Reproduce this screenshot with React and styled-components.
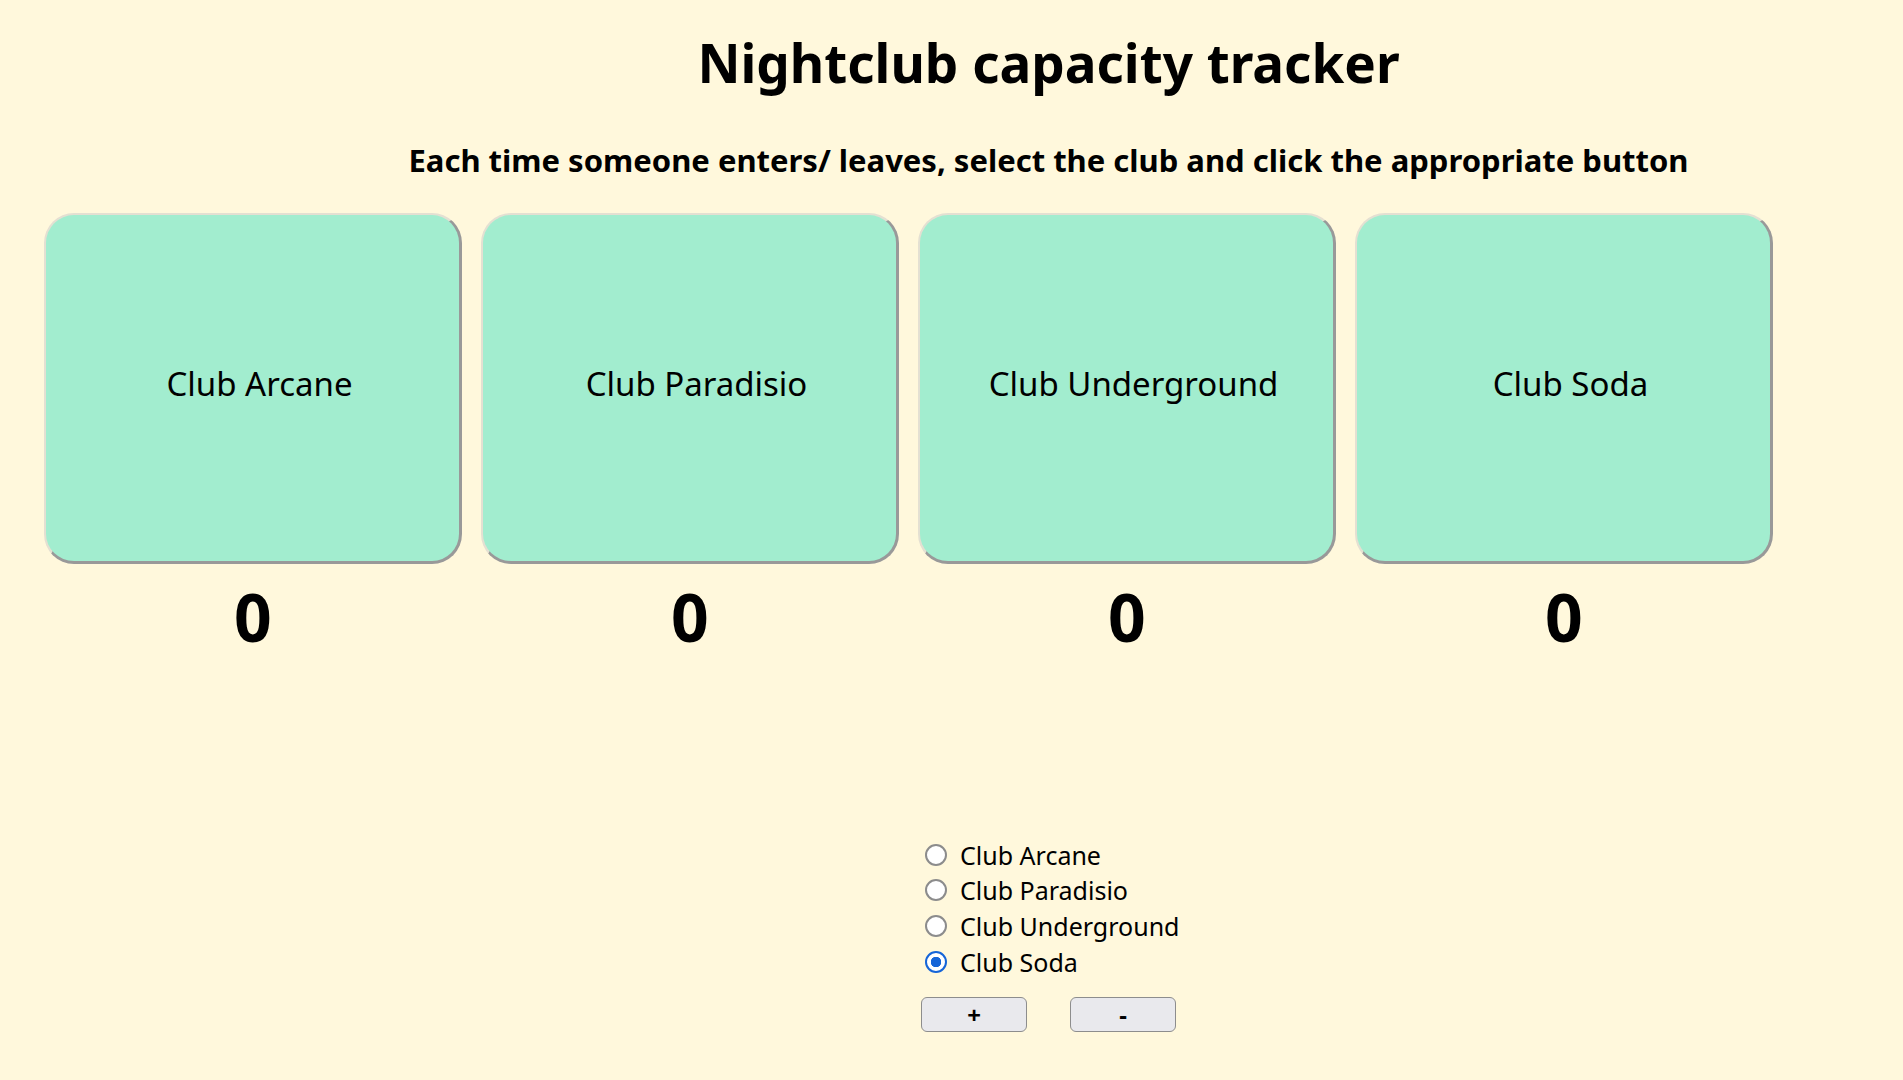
import React, { useState } from 'react';
import styled, { createGlobalStyle } from 'styled-components';

const GlobalStyle = createGlobalStyle`
  body {
    margin: 0;
    background-color: #fff8dc;
    font-family: "Noto Sans", "Open Sans", sans-serif;
    color: #000;
  }
`;

const Page = styled.div`
  padding: 30px 0 40px 44px;
`;

const Header = styled.header`
  padding-left: 150px;
  text-align: center;
`;

const Title = styled.h1`
  margin: 0;
  font-size: 53px;
  line-height: 66px;
  font-weight: 700;
`;

const Subtitle = styled.h3`
  margin: 44px 0 0;
  font-size: 31px;
  line-height: 40px;
  font-weight: 700;
`;

const ClubRow = styled.div`
  display: flex;
  gap: 19px;
  margin-top: 33px;
`;

const ClubColumn = styled.div`
  width: 418px;
  display: flex;
  flex-direction: column;
  align-items: center;
`;

const ClubCard = styled.div`
  box-sizing: border-box;
  width: 100%;
  height: 351px;
  padding: 0 0 10px 14px;
  display: flex;
  align-items: center;
  justify-content: center;
  background-color: #a2edcf;
  border: 2px solid;
  border-color: #e4e0d2 #999 #999 #e4e0d2;
  border-width: 2px 3px 3px 2px;
  border-radius: 30px;
  font-size: 33px;
`;

const Count = styled.div`
  margin-top: 12px;
  font-size: 66px;
  line-height: 80px;
  font-weight: 700;
`;

const Controls = styled.div`
  margin: 181px 0 0 877px;
`;

const RadioRow = styled.label`
  display: flex;
  align-items: center;
  height: 35.6px;
  font-size: 25px;
`;

const Radio = styled.input`
  appearance: none;
  box-sizing: border-box;
  width: 22px;
  height: 22px;
  margin: 0 13px 0 4px;
  border: 2.5px solid #8c8c8c;
  border-radius: 50%;
  background: #fff;

  &:checked {
    border-color: #1565d8;
    background: radial-gradient(circle, #1565d8 0 5px, #fff 5.5px);
  }
`;

const ButtonRow = styled.div`
  display: flex;
  gap: 43px;
  margin-top: 18px;
`;

const StepButton = styled.button`
  width: 106px;
  height: 35px;
  background-color: #e9e9ed;
  border: 1px solid #8d8d8d;
  border-radius: 6px;
  font-family: "Noto Sans", sans-serif;
  font-size: 24px;
  font-weight: 700;
  line-height: 1;
  padding: 0;
  color: #000;
`;

const clubs = ['Club Arcane', 'Club Paradisio', 'Club Underground', 'Club Soda'];

export default function App() {
  const [selected, setSelected] = useState(3);
  const [counts, setCounts] = useState([0, 0, 0, 0]);

  const change = (d) =>
    setCounts((c) => c.map((v, i) => (i === selected ? Math.max(0, v + d) : v)));

  return (
    <Page>
      <GlobalStyle />
      <Header>
        <Title>Nightclub capacity tracker</Title>
        <Subtitle>Each time someone enters/ leaves, select the club and click the appropriate button</Subtitle>
      </Header>
      <ClubRow>
        {clubs.map((name, i) => (
          <ClubColumn key={name}>
            <ClubCard>{name}</ClubCard>
            <Count>{counts[i]}</Count>
          </ClubColumn>
        ))}
      </ClubRow>
      <Controls>
        {clubs.map((name, i) => (
          <RadioRow key={name}>
            <Radio
              type="radio"
              name="club"
              checked={selected === i}
              onChange={() => setSelected(i)}
            />
            {name}
          </RadioRow>
        ))}
        <ButtonRow>
          <StepButton onClick={() => change(1)}>+</StepButton>
          <StepButton onClick={() => change(-1)}>-</StepButton>
        </ButtonRow>
      </Controls>
    </Page>
  );
}
